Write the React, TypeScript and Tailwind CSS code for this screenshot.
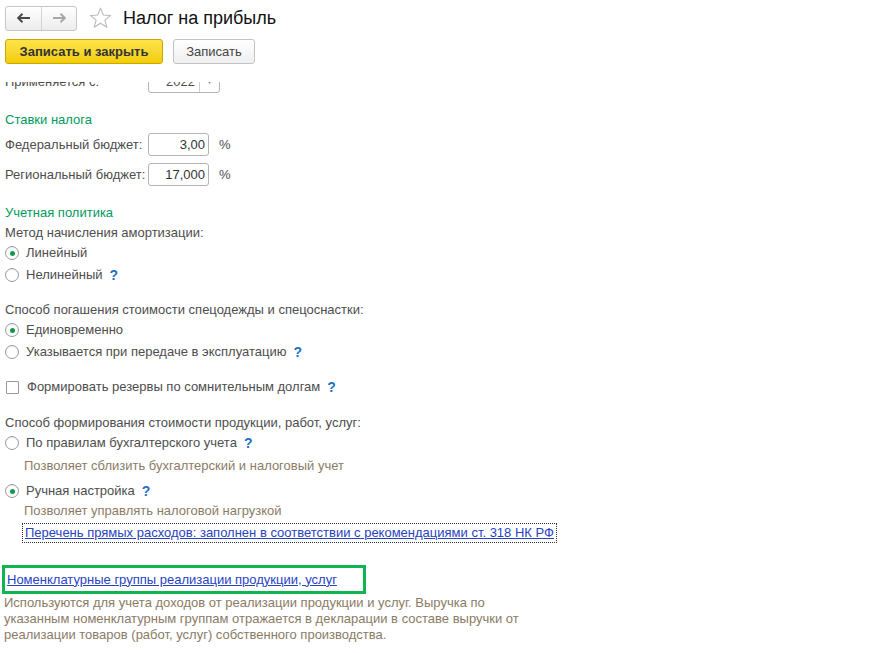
import React from "react";

const Help = () => (
  <span className="ml-[7px] font-bold text-[#1f6fc7] text-[14px]">?</span>
);

const Radio = ({ checked, label, help }: { checked?: boolean; label: string; help?: boolean }) => (
  <div className="flex items-center h-[20px] pl-[5px]">
    <span className="w-[14px] h-[14px] rounded-full border border-[#9a9a9a] bg-white flex items-center justify-center shadow-[inset_0_1px_1px_rgba(0,0,0,0.08)]">
      {checked && <span className="w-[5px] h-[5px] rounded-full bg-[#11994a]" />}
    </span>
    <span className="ml-[7px]">{label}</span>
    {help && <Help />}
  </div>
);

export default function App() {
  return (
    <div
      className="w-[873px] h-[653px] bg-white overflow-hidden text-[13px] text-[#4d4d4d]"
      style={{ fontFamily: '"Liberation Sans", Arial, sans-serif' }}
    >
      {/* header */}
      <div className="flex items-center pt-[5px] pl-[5px] h-[31px]">
        <div className="flex h-[25px] w-[72px] rounded-[3px] border border-[#c6c6c6] bg-gradient-to-b from-white to-[#ececec]">
          <div className="w-[36px] flex items-center justify-center border-r border-[#d4d4d4]">
            <svg width="14" height="10" viewBox="0 0 14 10">
              <path d="M1 5 H13" stroke="#4a4a4a" strokeWidth="2" />
              <path d="M5.5 0.8 L1.2 5 L5.5 9.2" stroke="#4a4a4a" strokeWidth="2" fill="none" />
            </svg>
          </div>
          <div className="flex-1 flex items-center justify-center">
            <svg width="14" height="10" viewBox="0 0 14 10">
              <path d="M1 5 H13" stroke="#a8a8a8" strokeWidth="2" />
              <path d="M8.5 0.8 L12.8 5 L8.5 9.2" stroke="#a8a8a8" strokeWidth="2" fill="none" />
            </svg>
          </div>
        </div>
        <svg className="ml-[12px]" width="23" height="22" viewBox="0 0 24 23">
          <path
            d="M12 1.2 L14.9 8.4 L22.6 8.8 L16.6 13.7 L18.6 21.2 L12 17 L5.4 21.2 L7.4 13.7 L1.4 8.8 L9.1 8.4 Z"
            fill="none"
            stroke="#b8b8b8"
            strokeWidth="1.1"
            strokeLinejoin="round"
          />
        </svg>
        <span className="ml-[11px] text-[18px] text-[#111] leading-none">Налог на прибыль</span>
      </div>

      {/* toolbar */}
      <div className="flex pl-[5px] mt-[8px] gap-[10px] h-[25px]">
        <button className="w-[158px] h-[25px] rounded-[3px] border border-[#c9a800] bg-gradient-to-b from-[#ffe347] to-[#f2cd00] text-[#333] font-bold text-[13px]">
          Записать и закрыть
        </button>
        <button className="w-[82px] h-[25px] rounded-[3px] border border-[#c2c2c2] bg-gradient-to-b from-white to-[#efefef] text-[#444] text-[13px]">
          Записать
        </button>
      </div>

      {/* scroll area */}
      <div className="mt-[18px] h-[571px] overflow-hidden">
        <div className="-mt-[12px]">
          {/* Применяется с */}
          <div className="flex items-center h-[23px] pl-[5px]">
            <span className="w-[143px]">Применяется с:</span>
            <div className="w-[72px] h-[23px] rounded-[3px] border border-[#b4b4b4] flex">
              <div className="flex-1 text-right pr-[4px] flex items-center justify-end">2022</div>
              <div className="w-[20px] border-l border-[#cfcfcf] flex items-center justify-center">
                <span className="text-[8px] text-[#777]">▼</span>
              </div>
            </div>
          </div>

          <div className="mt-[17px] h-[20px] flex items-center pl-[5px] text-[#009a5c]">Ставки налога</div>

          <div className="mt-[3px] flex items-center h-[23px] pl-[5px]">
            <span className="w-[143px]">Федеральный бюджет:</span>
            <div className="w-[61px] h-[23px] rounded-[3px] border border-[#b4b4b4] flex items-center justify-end pr-[3px] text-[#333]">3,00</div>
            <span className="ml-[10px]">%</span>
          </div>
          <div className="mt-[7px] flex items-center h-[23px] pl-[5px]">
            <span className="w-[143px]">Региональный бюджет:</span>
            <div className="w-[61px] h-[23px] rounded-[3px] border border-[#b4b4b4] flex items-center justify-end pr-[3px] text-[#333]">17,000</div>
            <span className="ml-[10px]">%</span>
          </div>

          <div className="mt-[17px] h-[20px] flex items-center pl-[5px] text-[#009a5c]">Учетная политика</div>
          <div className="h-[20px] flex items-center pl-[5px]">Метод начисления амортизации:</div>
          <Radio checked label="Линейный" />
          <div className="mt-[2px]">
            <Radio label="Нелинейный" help />
          </div>

          <div className="mt-[15px] h-[20px] flex items-center pl-[5px]">
            Способ погашения стоимости спецодежды и спецоснастки:
          </div>
          <Radio checked label="Единовременно" />
          <div className="mt-[2px]">
            <Radio label="Указывается при передаче в эксплуатацию" help />
          </div>

          <div className="mt-[15px] h-[20px] flex items-center pl-[6px]">
            <span className="w-[13px] h-[13px] border border-[#9a9a9a] rounded-[1px] bg-white" />
            <span className="ml-[8px]">Формировать резервы по сомнительным долгам</span>
            <Help />
          </div>

          <div className="mt-[16px] h-[20px] flex items-center pl-[5px]">
            Способ формирования стоимости продукции, работ, услуг:
          </div>
          <Radio label="По правилам бухгалтерского учета" help />
          <div className="mt-[3px] h-[20px] flex items-center pl-[24px] text-[#8b7b66]">
            Позволяет сблизить бухгалтерский и налоговый учет
          </div>
          <div className="mt-[5px]">
            <Radio checked label="Ручная настройка" help />
          </div>
          <div className="h-[20px] flex items-center pl-[24px] text-[#8b7b66]">
            Позволяет управлять налоговой нагрузкой
          </div>
          <div className="mt-[2px] h-[20px] flex items-center pl-[22px]">
            <span className="h-[20px] flex items-center px-[2px] border border-dotted border-[#333] text-[#2843c2] underline">
              Перечень прямых расходов: заполнен в соответствии с рекомендациями ст. 318 НК РФ
            </span>
          </div>

          <div className="mt-[22px] ml-[2px] w-[364px] h-[29px] border-[3px] border-[#10b552] flex items-center pl-[2px]">
            <span className="text-[#2843c2] underline">Номенклатурные группы реализации продукции, услуг</span>
          </div>
          <div className="mt-[1px] pl-[4px] w-[530px] leading-[16px] text-[#8b7b66]">
            Используются для учета доходов от реализации продукции и услуг. Выручка по указанным
            номенклатурным группам отражается в декларации в составе выручки от реализации товаров
            (работ, услуг) собственного производства.
          </div>
        </div>
      </div>
    </div>
  );
}
